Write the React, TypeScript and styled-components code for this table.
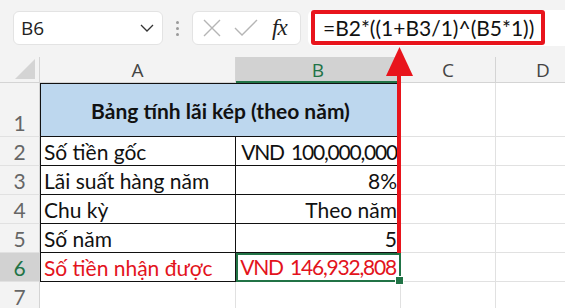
import React from "react";
import styled, { createGlobalStyle } from "styled-components";

const GlobalStyle = createGlobalStyle`
	html, body {
		margin: 0;
		padding: 0;
		background: #ffffff;
	}
	* {
		box-sizing: border-box;
	}
`;

const Sheet = styled.div`
	position: relative;
	width: 565px;
	height: 308px;
	overflow: hidden;
	background: #ffffff;
	font-family: Lato, "Liberation Sans", sans-serif;
`;

const Toolbar = styled.div`
	display: flex;
	align-items: center;
	height: 57px;
	padding: 11px 0 12px 13px;
	background: #f3f3f3;
`;

const NameBox = styled.div`
	display: flex;
	align-items: center;
	justify-content: space-between;
	width: 150px;
	height: 34px;
	padding: 0 8px 0 7px;
	background: #ffffff;
	border: 1px solid #e3e3e3;
	border-radius: 6px;
	font-family: "Open Sans", "Noto Sans", sans-serif;
	font-size: 19px;
	color: #222;
`;

const Grip = styled.div`
	display: flex;
	flex-direction: column;
	gap: 3px;
	margin: 0 13px 0 13px;

	& > span {
		width: 3px;
		height: 3px;
		border-radius: 50%;
		background: #9a9a9a;
	}
`;

const FxBox = styled.div`
	display: flex;
	align-items: center;
	gap: 13px;
	width: 109px;
	height: 34px;
	padding: 0 8px 0 10px;
	background: #ffffff;
	border: 1px solid #e3e3e3;
	border-radius: 6px;
`;

const FxLabel = styled.span`
	font-family: "Liberation Serif", "DejaVu Serif", serif;
	font-style: italic;
	font-size: 23px;
	color: #222;
	margin-left: 1px;
	letter-spacing: -1px;
`;

const FormulaBar = styled.div`
	flex: 1;
	height: 36px;
	margin-left: 7px;
	margin-top: -1px;
	padding-left: 3px;
	background: #ffffff;
	border-radius: 6px 0 0 6px;
	display: flex;
	align-items: center;
`;

const FormulaFrame = styled.div`
	width: 234px;
	height: 35px;
	border: 4px solid #e8141c;
	border-radius: 3px;
	padding-left: 8px;
	display: flex;
	align-items: center;
	font-size: 21px;
	color: #111;
	white-space: nowrap;
`;

const Grid = styled.div`
	display: grid;
	grid-template-columns: 40px 196px 165px 95px 95px;
	grid-template-rows: 26px 54px repeat(5, 29px) 29px;
`;

const Corner = styled.div`
	background: #f3f3f3;
	border-right: 1px solid #d4d4d4;
	border-bottom: 1px solid #d4d4d4;
	display: flex;
	align-items: flex-end;
	justify-content: flex-end;
	padding: 0 4px 3px 0;
`;

const ColHead = styled.div<{ $active?: boolean }>`
	display: flex;
	align-items: center;
	justify-content: center;
	background: ${(p) => (p.$active ? "#d2d2d2" : "#f3f3f3")};
	border-right: 1px solid #d4d4d4;
	border-bottom: ${(p) => (p.$active ? "2px solid #217346" : "1px solid #d4d4d4")};
	color: ${(p) => (p.$active ? "#217346" : "#444")};
	font-family: "Open Sans", "Noto Sans", sans-serif;
	font-size: 19px;
	padding-top: 1px;
`;

const RowHead = styled.div<{ $active?: boolean }>`
	display: flex;
	align-items: flex-end;
	justify-content: center;
	padding-bottom: 0;
	background: ${(p) => (p.$active ? "#d2d2d2" : "#f3f3f3")};
	border-right: 1px solid #d4d4d4;
	border-bottom: 1px solid #e1e1e1;
	color: ${(p) => (p.$active ? "#217346" : "#666")};
	font-size: 21px;
	line-height: 26px;
`;

const Cell = styled.div<{
	$boxed?: boolean;
	$first?: boolean;
	$top?: boolean;
	$right?: boolean;
	$red?: boolean;
	$tight?: boolean;
}>`
	display: flex;
	align-items: flex-end;
	justify-content: ${(p) => (p.$right ? "flex-end" : "flex-start")};
	padding: 0 3px 0 3px;
	font-size: 21px;
	line-height: 26px;
	white-space: nowrap;
	letter-spacing: ${(p) => (p.$tight ? "-1.2px" : "normal")};
	word-spacing: ${(p) => (p.$tight ? "3px" : "normal")};
	color: ${(p) => (p.$red ? "#e3131c" : "#111")};
	border-right: 1px solid ${(p) => (p.$boxed ? "#111" : "#e1e1e1")};
	border-bottom: 1px solid ${(p) => (p.$boxed ? "#111" : "#e1e1e1")};
	border-left: ${(p) => (p.$first ? "1px solid #111" : "none")};
	border-top: ${(p) => (p.$top ? "1px solid #111" : "none")};
`;

const TitleCell = styled(Cell)`
	grid-column: span 2;
	align-items: center;
	justify-content: center;
	background: #bdd7ee;
	font-weight: 700;
	padding: 2px 0 0 0;
`;

const Selected = styled(Cell)`
	position: relative;
	border: 2px solid #217346;
	padding-right: 3px;

	&::after {
		content: "";
		position: absolute;
		right: -5px;
		bottom: -5px;
		width: 7px;
		height: 7px;
		background: #217346;
		border: 1px solid #ffffff;
	}
`;

const ArrowLayer = styled.svg`
	position: absolute;
	left: 0;
	top: 0;
	pointer-events: none;
`;

const rows: { label: string; value: string; tight?: boolean }[] = [
	{ label: "Số tiền gốc", value: "VND 100,000,000", tight: true },
	{ label: "Lãi suất hàng năm", value: "8%" },
	{ label: "Chu kỳ", value: "Theo năm" },
	{ label: "Số năm", value: "5" },
];

export default function App() {
	return (
		<Sheet>
			<GlobalStyle />
			<Toolbar>
				<NameBox>
					<span>B6</span>
					<svg width="14" height="8" viewBox="0 0 14 8">
						<path d="M1 1 L7 7 L13 1" fill="none" stroke="#333" strokeWidth="1.3" />
					</svg>
				</NameBox>
				<Grip>
					<span />
					<span />
					<span />
				</Grip>
				<FxBox>
					<svg width="18" height="18" viewBox="0 0 18 18">
						<path d="M1 1 L17 17 M17 1 L1 17" stroke="#b5b5b5" strokeWidth="1.4" />
					</svg>
					<svg width="24" height="18" viewBox="0 0 24 18">
						<path d="M1 9 L8 16 L23 1" fill="none" stroke="#b5b5b5" strokeWidth="1.4" />
					</svg>
					<FxLabel>fx</FxLabel>
				</FxBox>
				<FormulaBar>
					<FormulaFrame>=B2*((1+B3/1)^(B5*1))</FormulaFrame>
				</FormulaBar>
			</Toolbar>
			<Grid>
				<Corner>
					<svg width="20" height="20" viewBox="0 0 20 20">
						<path d="M20 0 L20 20 L0 20 Z" fill="#d4d4d4" />
					</svg>
				</Corner>
				<ColHead>A</ColHead>
				<ColHead $active>B</ColHead>
				<ColHead>C</ColHead>
				<ColHead>D</ColHead>

				<RowHead>1</RowHead>
				<TitleCell $boxed $first $top>
					Bảng tính lãi kép (theo năm)
				</TitleCell>
				<Cell />
				<Cell />

				{rows.map((r, i) => (
					<React.Fragment key={r.label}>
						<RowHead>{i + 2}</RowHead>
						<Cell $boxed $first>
							{r.label}
						</Cell>
						<Cell $boxed $right $tight={r.tight}>
							{r.value}
						</Cell>
						<Cell />
						<Cell />
					</React.Fragment>
				))}

				<RowHead $active>6</RowHead>
				<Cell $boxed $first $red>
					Số tiền nhận được
				</Cell>
				<Selected $right $red $tight>
					VND 146,932,808
				</Selected>
				<Cell />
				<Cell />

				<RowHead>7</RowHead>
				<Cell />
				<Cell />
				<Cell />
				<Cell />
			</Grid>
			<ArrowLayer width="565" height="308">
				<polygon points="399.5,47 386,76 413,76" fill="#e8141c" />
				<rect x="397" y="74" width="4" height="179" fill="#e8141c" />
			</ArrowLayer>
		</Sheet>
	);
}
